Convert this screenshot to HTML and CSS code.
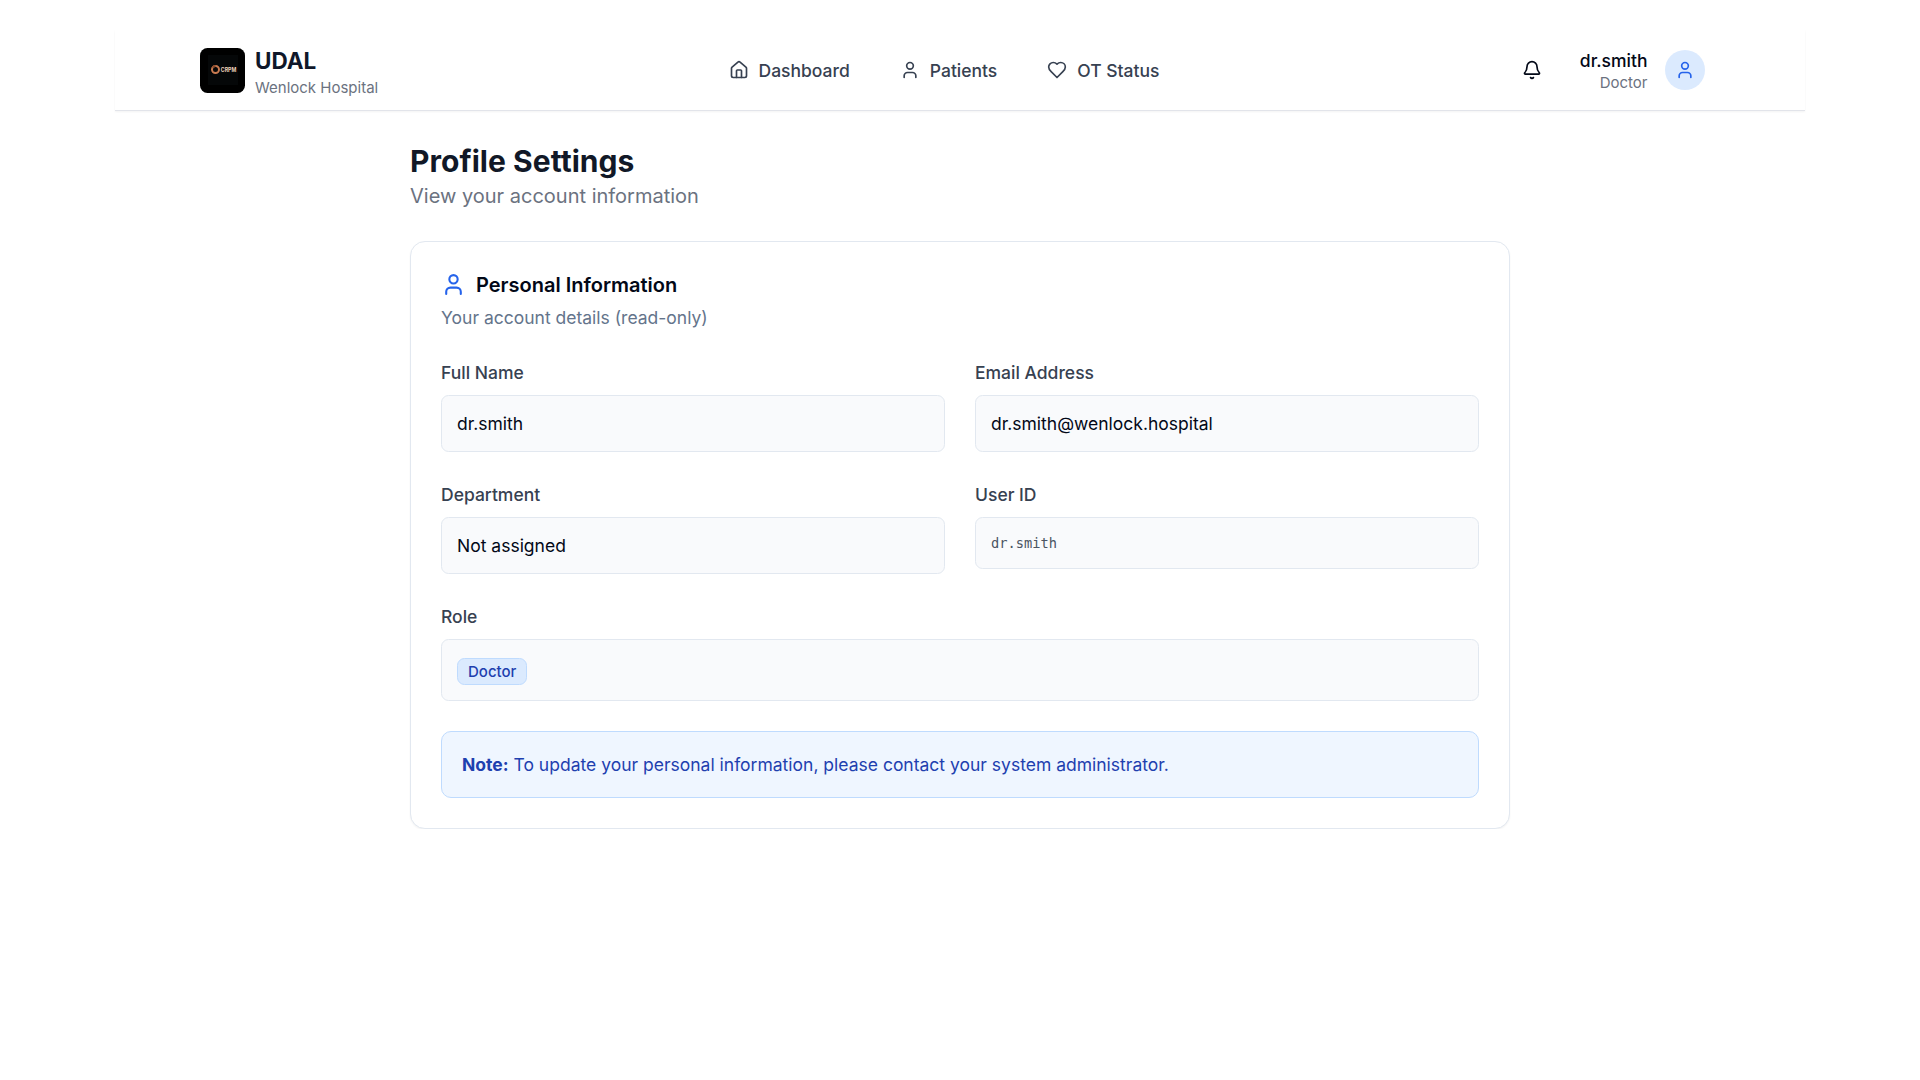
FILE: index.html
```html
<!DOCTYPE html>
<html lang="en">
<head>
<meta charset="utf-8">
<title>Profile Settings</title>
<link rel="stylesheet" href="styles.css">
</head>
<body>
<svg class="sprite" width="0" height="0">
  <symbol id="user" viewBox="0 0 24 24"><path d="M19 21v-2a4 4 0 0 0-4-4H9a4 4 0 0 0-4 4v2"/><circle cx="12" cy="7" r="4"/></symbol>
</svg>
<header class="topbar">
  <div class="brand">
    <svg class="logo" viewBox="0 0 45 45">
      <rect width="45" height="45" fill="#000"/>
      <rect x="8" y="7" width="30" height="30" fill="#050708"/>
      <circle cx="15.5" cy="21.5" r="3.5" fill="none" stroke="#c87a50" stroke-width="2"/>
      <path d="M12.6 19.6a3.5 3.5 0 0 1 3-1.6" fill="none" stroke="#8a4a2c" stroke-width="2"/>
      <text class="logo-text" x="20.8" y="24" textLength="15.5" lengthAdjust="spacingAndGlyphs">CRPM</text>
    </svg>
    <div class="brand-text">
      <div class="brand-name">UDAL</div>
      <div class="brand-sub">Wenlock Hospital</div>
    </div>
  </div>
  <nav class="nav">
    <a class="nav-item"><svg class="icon" viewBox="0 0 24 24"><path d="M15 21v-8a1 1 0 0 0-1-1h-4a1 1 0 0 0-1 1v8"/><path d="M3 10a2 2 0 0 1 .709-1.528l7-5.999a2 2 0 0 1 2.582 0l7 5.999A2 2 0 0 1 21 10v9a2 2 0 0 1-2 2H5a2 2 0 0 1-2-2z"/></svg>Dashboard</a>
    <a class="nav-item"><svg class="icon"><use href="#user"/></svg>Patients</a>
    <a class="nav-item"><svg class="icon" viewBox="0 0 24 24"><path d="M19 14c1.49-1.46 3-3.21 3-5.5A5.5 5.5 0 0 0 16.5 3c-1.76 0-3 .5-4.5 2-1.5-1.5-2.74-2-4.5-2A5.5 5.5 0 0 0 2 8.5c0 2.3 1.5 4.05 3 5.5l7 7Z"/></svg>OT Status</a>
  </nav>
  <div class="account">
    <svg class="icon bell" viewBox="0 0 24 24"><path d="M10.268 21a2 2 0 0 0 3.464 0"/><path d="M3.262 15.326A1 1 0 0 0 4 17h16a1 1 0 0 0 .74-1.673C19.41 13.956 18 12.499 18 8A6 6 0 0 0 6 8c0 4.499-1.411 5.956-2.738 7.326"/></svg>
    <div class="account-text">
      <div class="account-name">dr.smith</div>
      <div class="account-role">Doctor</div>
    </div>
    <div class="avatar"><svg class="icon"><use href="#user"/></svg></div>
  </div>
</header>
<main class="page">
  <h1 class="title">Profile Settings</h1>
  <p class="subtitle">View your account information</p>
  <section class="card">
    <h2 class="card-title"><svg class="icon icon-lg"><use href="#user"/></svg><span class="card-title-text">Personal Information</span></h2>
    <p class="card-desc">Your account details (read-only)</p>
    <div class="grid">
      <div class="field"><div class="label">Full Name</div><div class="value">dr.smith</div></div>
      <div class="field"><div class="label">Email Address</div><div class="value">dr.smith@wenlock.hospital</div></div>
      <div class="field"><div class="label">Department</div><div class="value">Not assigned</div></div>
      <div class="field"><div class="label">User ID</div><div class="value mono">dr.smith</div></div>
      <div class="field wide"><div class="label">Role</div><div class="value role"><span class="badge">Doctor</span></div></div>
    </div>
    <div class="note"><strong>Note:</strong> To update your personal information, please contact your system administrator.</div>
  </section>
</main>
</body>
</html>
```
FILE: styles.css
```css
* { box-sizing: border-box; margin: 0; }
body {
  background: #fff;
  color: #020817;
  font: 17.5px/25px Inter, "Liberation Sans", sans-serif;
  padding-top: 30px;
}
.sprite { display: block; }
.icon {
  width: 20px;
  height: 20px;
  flex: none;
  fill: none;
  stroke: currentColor;
  stroke-width: 2;
  stroke-linecap: round;
  stroke-linejoin: round;
}
.icon-lg { width: 25px; height: 25px; color: #2563eb; }

.topbar {
  width: 1690px;
  height: 81px;
  margin: 0 auto;
  padding: 0 100px 0 85px;
  display: grid;
  grid-template-columns: 1fr auto 1fr;
  align-items: center;
  background: #fff;
  border-bottom: 1px solid #e2e4ea;
  box-shadow: 0 1px 2px rgba(0, 0, 0, .05);
}
.brand { display: flex; align-items: center; gap: 10px; }
.logo { width: 45px; height: 45px; border-radius: 7.5px; }
.logo-text { font: 700 5.6px Inter, sans-serif; fill: #efd2bb; }
.brand-text { padding-top: 6px; }
.brand-name { font-size: 22.5px; font-weight: 700; line-height: 28px; color: #0f172a; }
.brand-sub { font-size: 15px; color: #6b7280; }
.nav { display: flex; gap: 50px; margin-right: 17px; color: #374151; font-weight: 500; }
.nav-item { display: flex; align-items: center; gap: 10px; }
.account { display: flex; align-items: center; justify-content: flex-end; }
.bell { margin-right: 38px; }
.account-text { text-align: right; margin-right: 17.5px; padding-top: 4px; }
.account-name { font-weight: 500; line-height: 22px; }
.account-role { font-size: 15px; line-height: 22px; color: #6b7280; }
.avatar {
  width: 40px;
  height: 40px;
  border-radius: 50%;
  display: flex;
  align-items: center;
  justify-content: center;
  background: #dbeafe;
  color: #2563eb;
}

.page { width: 1100px; margin: 0 auto; padding-top: 30px; }
.title { font-size: 30px; line-height: 40px; font-weight: 700; letter-spacing: .04px; color: #111827; }
.subtitle { font-size: 20px; line-height: 30px; color: #6b7280; }
.card {
  margin-top: 30px;
  padding: 30px;
  background: #fff;
  border: 1px solid #e2e8f0;
  border-radius: 15px;
  box-shadow: 0 1px 2px rgba(0, 0, 0, .05);
}
.card-title { display: flex; align-items: center; gap: 10px; height: 25px; font-size: 20px; font-weight: 600; line-height: 25px; }
.card-title-text { padding-top: 2px; }
.card-desc { margin-top: 8px; color: #64748b; }
.grid { display: grid; grid-template-columns: 1fr 1fr; gap: 30px; margin-top: 30px; align-items: start; }
.wide { grid-column: span 2; }
.label { font-weight: 500; color: #374151; margin-bottom: 10px; }
.value { padding: 15px; background: #f9fafc; border: 1px solid #e2e8f0; border-radius: 7.5px; }
.mono { font: 13.7px/20px "DejaVu Sans Mono", monospace; color: #4b5563; }
.role { display: flex; align-items: center; height: 62px; padding-top: 17px; }
.badge {
  padding: 3px 10px 2px;
  font-size: 15px;
  line-height: 20px;
  font-weight: 500;
  color: #1e40af;
  background: #dbeafe;
  border: 1px solid #bfdbfe;
  border-radius: 7.5px;
}
.note {
  margin-top: 30px;
  padding: 20px;
  color: #1e40af;
  background: #eff6ff;
  border: 1px solid #bfdbfe;
  border-radius: 10px;
}
.note strong { font-weight: 700; }
```
